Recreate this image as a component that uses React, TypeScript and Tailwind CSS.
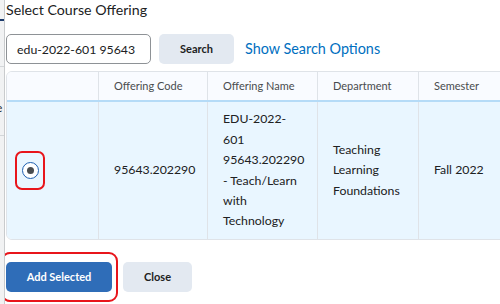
import React from "react";

const App = () => {
  return (
    <div className="w-[500px] h-[304px] flex bg-white overflow-hidden font-['Lato',sans-serif] text-[#202122]">
      {/* page behind the dialog */}
      <div className="w-[5px] h-full bg-[#f1f2f3] border-r border-[#c9cbcd] flex flex-col overflow-hidden shrink-0">
        <div className="h-[19px]" />
        <div className="h-[2px] w-full bg-[#1c3a6b]" />
        <div className="h-[45px]" />
        <div className="h-px w-full bg-[#d3d6d9]" />
        <div className="h-[34px]" />
        <div className="text-[12px] leading-[14px] -ml-[4px]">e</div>
        <div className="h-[20px]" />
        <div className="h-px w-full bg-[#d3d6d9]" />
      </div>

      {/* dialog */}
      <div className="flex-1 flex flex-col pl-[1px] overflow-hidden">
        <h1 className="text-[14.2px] leading-[20px] text-[#202122]">Select Course Offering</h1>

        {/* search bar */}
        <div className="flex items-center mt-[14px] h-[30px]">
          <input
            className="w-[145px] h-[30px] border border-[#8e9296] rounded-[5px] px-[10px] text-[12.3px] text-[#202122] outline-none bg-white"
            defaultValue="edu-2022-601 95643"
          />
          <button className="ml-[8px] w-[75px] h-[30px] bg-[#e3e9f1] rounded-[5px] text-[11px] font-bold text-[#202122]">
            Search
          </button>
          <span className="ml-[11px] text-[14.4px] text-[#006fbf]">Show Search Options</span>
        </div>

        {/* results table */}
        <div className="mt-[7px] w-[560px] border border-[#dfe3e8] rounded-[6px] overflow-hidden flex flex-col">
          <div className="flex h-[30px] bg-[#f9fbff] border-b-[2px] border-[#b5dbf7] text-[11px] text-[#494c4e]">
            <div className="w-[92px] border-r border-[#dfe3e8]" />
            <div className="w-[109px] border-r border-[#dfe3e8] pl-[15px] flex items-center">Offering Code</div>
            <div className="w-[110px] border-r border-[#dfe3e8] pl-[15px] flex items-center">Offering Name</div>
            <div className="w-[101px] border-r border-[#dfe3e8] pl-[15px] flex items-center">Department</div>
            <div className="flex-1 pl-[15px] flex items-center">Semester</div>
          </div>
          <div className="flex h-[137px] bg-[#e9f6ff] text-[12.3px] leading-[20.4px]">
            <div className="w-[92px] border-r border-[#dfe3e8] pl-[8px] flex items-center">
              <div className="w-[30px] h-[39px] border-2 border-[#e8151b] rounded-[7px] flex items-center justify-center">
                <div className="w-[17px] h-[17px] rounded-full border-[1.5px] border-[#1d5fb0] bg-white flex items-center justify-center">
                  <div className="w-[7px] h-[7px] rounded-full bg-[#494c4e]" />
                </div>
              </div>
            </div>
            <div className="w-[109px] border-r border-[#dfe3e8] pl-[15px] flex items-center">95643.202290</div>
            <div className="w-[110px] border-r border-[#dfe3e8] pl-[15px] pr-[8px] flex items-center">
              <div>
                EDU-2022-
                <br />
                601
                <br />
                95643.202290
                <br />- Teach/Learn
                <br />
                with
                <br />
                Technology
              </div>
            </div>
            <div className="w-[101px] border-r border-[#dfe3e8] pl-[15px] flex items-center">
              <div>
                Teaching
                <br />
                Learning
                <br />
                Foundations
              </div>
            </div>
            <div className="flex-1 pl-[15px] flex items-center">Fall 2022</div>
          </div>
        </div>

        {/* footer buttons */}
        <div className="flex items-center mt-[12px] -ml-[5px]">
          <div className="border-2 border-[#e8151b] rounded-[9px] pl-[3px] pr-[4px] py-[8px]">
            <button className="w-[106px] h-[30px] bg-[#2f6db8] rounded-[5px] text-white text-[11px] font-bold">
              Add Selected
            </button>
          </div>
          <button className="ml-[5px] w-[69px] h-[30px] bg-[#e3e9f1] rounded-[5px] text-[11px] font-bold text-[#202122]">
            Close
          </button>
        </div>
      </div>
    </div>
  );
};

export default App;
